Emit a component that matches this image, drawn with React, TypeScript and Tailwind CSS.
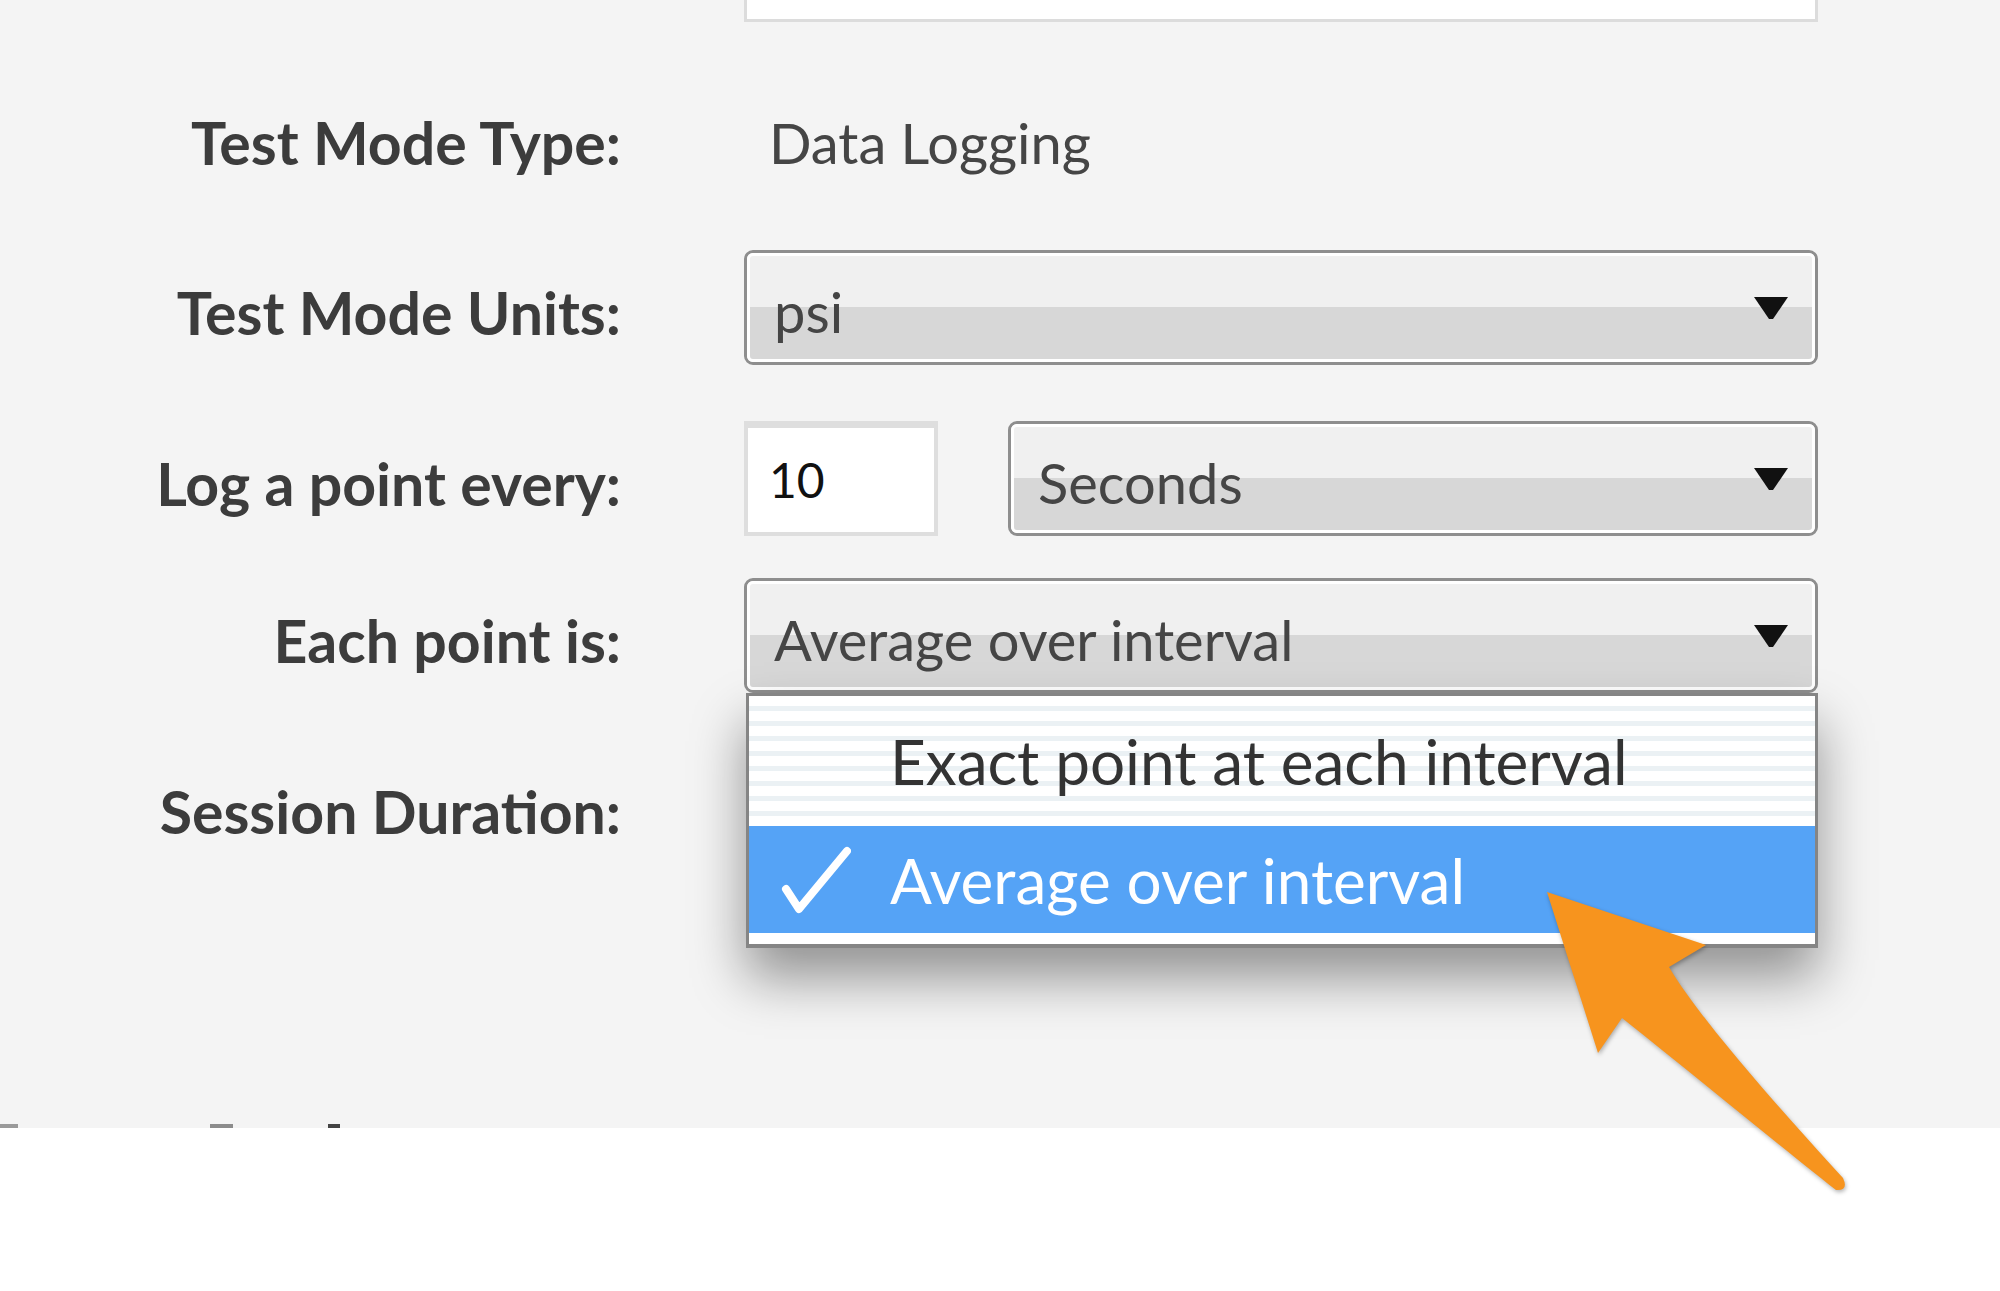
import React from 'react';

const Arrow: React.FC = () => (
  <svg width="34" height="22" viewBox="0 0 34 22" className="shrink-0">
    <polygon points="0,0 34,0 19,22 15,22" fill="#111" />
  </svg>
);

const Select: React.FC<{ value: string; className?: string }> = ({ value, className = '' }) => (
  <div className={`h-[115px] rounded-[9px] border-[3px] border-[#8e8e8e] ${className}`}>
    <div className="h-full rounded-[6px] border-[3px] border-white bg-[linear-gradient(to_bottom,#f0f0f0_0%,#f0f0f0_50%,#d7d7d7_50%,#d7d7d7_100%)] flex items-center justify-between pl-[24px] pr-[24px]">
      <span className="pt-[8px] text-[56px] leading-none text-[#454545]">{value}</span>
      <Arrow />
    </div>
  </div>
);

const Label: React.FC<{ children: React.ReactNode; offset?: boolean }> = ({ children, offset = true }) => (
  <div className={`w-[621px] text-right font-bold text-[59px] leading-none text-[#3c3c3c] ${offset ? 'mt-[10px]' : ''}`}>
    {children}
  </div>
);

const App: React.FC = () => {
  return (
    <div className="relative w-[2000px] h-[1291px] bg-white overflow-hidden font-['Lato','Open_Sans',sans-serif]">
      <div className="h-[1128px] bg-[#f4f4f4] flex flex-col">
        {/* field cut off at the top */}
        <div className="flex">
          <div className="w-[621px]" />
          <div className="ml-[123px] w-[1074px] h-[22px] bg-white border-x-[3px] border-b-[3px] border-[#dcdcdc]" />
        </div>

        <div className="flex items-center h-[115px] mt-[63px]">
          <Label offset={false}>Test Mode Type:</Label>
          <div className="ml-[123px] w-[1074px] pl-[25px] text-[56px] leading-none text-[#454545]">Data Logging</div>
        </div>

        <div className="flex items-center mt-[50px]">
          <Label>Test Mode Units:</Label>
          <Select value="psi" className="ml-[123px] w-[1074px]" />
        </div>

        <div className="flex items-center mt-[56px]">
          <Label>Log a point every:</Label>
          <div className="ml-[123px] w-[1074px] flex items-center gap-[70px]">
            <div className="w-[194px] h-[115px] bg-white border-[4px] border-t-[7px] border-[#dedede] flex items-center pl-[21px]">
              <span className="text-[48px] leading-none text-[#111]">10</span>
            </div>
            <Select value="Seconds" className="flex-1" />
          </div>
        </div>

        <div className="flex items-center mt-[42px]">
          <Label>Each point is:</Label>
          <div className="relative ml-[123px] w-[1074px]">
            <Select value="Average over interval" />
            <div className="absolute top-full left-[2px] right-0 z-10 border-x-[3px] border-t-[3px] border-b-[4px] border-[#858585] bg-white shadow-[0_30px_50px_rgba(0,0,0,0.4)]">
              <div className="h-[130px] flex items-center pl-[141px] bg-[repeating-linear-gradient(to_bottom,#ffffff_0px,#ffffff_10px,#ebf1f4_10px,#ebf1f4_15px)]">
                <span className="text-[62px] leading-none text-[#333]">Exact point at each interval</span>
              </div>
              <div className="h-[107px] flex items-center bg-[#55a3f6]">
                <svg width="70" height="70" viewBox="0 0 70 70" className="ml-[32px] mr-[39px] shrink-0">
                  <path d="M5 44 L18 64 L66 6" fill="none" stroke="#fff" strokeWidth="8" strokeLinejoin="round" strokeLinecap="round" />
                </svg>
                <span className="text-[62px] leading-none text-white">Average over interval</span>
              </div>
              <div className="h-[11px] bg-white" />
            </div>
          </div>
        </div>

        <div className="flex items-center h-[115px] mt-[61px]">
          <Label offset={false}>Session Duration:</Label>
        </div>

        {/* tops of the next heading, cut off */}
        <div className="mt-auto flex items-end h-[4px]">
          <div className="w-[18px] h-[4px] bg-[#9a9a9a]" />
          <div className="ml-[192px] w-[23px] h-[4px] bg-[#8c8c8c]" />
          <div className="ml-[95px] w-[12px] h-[4px] bg-[#444]" />
        </div>
      </div>

      <svg
        className="absolute inset-0 pointer-events-none z-20 drop-shadow-[1px_2px_2px_rgba(0,0,0,0.3)]"
        width="2000"
        height="1291"
        viewBox="0 0 2000 1291"
      >
        <path
          d="M1547 892 L1706 945 L1669 967 C1700 1020 1790 1120 1843 1178 Q1849 1191 1836 1190 C1780 1146 1700 1080 1622 1018 L1598 1053 Z"
          fill="#f7941e"
        />
      </svg>
    </div>
  );
};

export default App;
